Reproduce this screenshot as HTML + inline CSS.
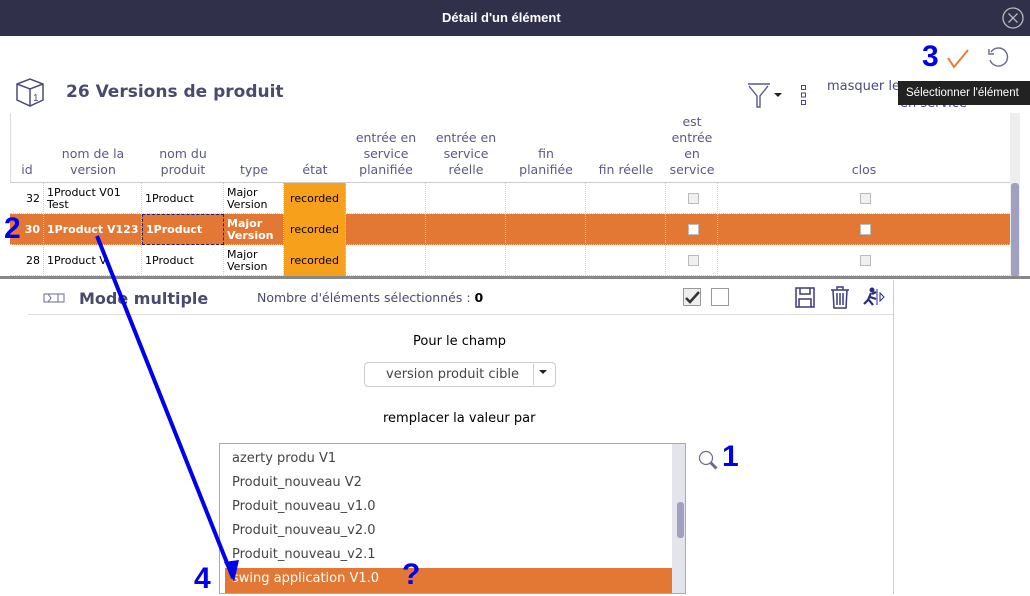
<!DOCTYPE html>
<html><head><meta charset="utf-8"><style>
*{margin:0;padding:0;box-sizing:border-box}
body{width:1030px;height:594px;overflow:hidden;background:#fff;font-family:"DejaVu Sans","Liberation Sans",sans-serif;position:relative;font-size:12px;color:#000}
.a{position:absolute}
.hd{color:#5a5a80;font-size:12.5px;text-align:center;line-height:16px}
.c{position:absolute;top:0;height:31px;border-right:1px dotted #cfcfc0;font-size:11px;line-height:12px;display:flex;align-items:center;padding-left:3px;white-space:nowrap}
.row{position:absolute;left:10px;width:1000px;height:31px;border-bottom:1px dotted #ccc}
.et{background:#f7a01c;justify-content:center;padding:0}
.cb{width:11px;height:11px;border:1px solid #bbb;background:#f0f0f0;margin:auto}
.big{color:#0000ee;font-weight:bold;font-size:30px;position:absolute;font-family:"Liberation Sans",sans-serif}
.li{position:absolute;left:12px;font-size:13px;color:#444}
</style></head><body>
<div class="a" style="left:0;top:0;width:1030px;height:36px;background:#30304b"></div>
<div class="a" style="left:442px;top:10px;color:#fff;font-weight:bold;font-size:13px;font-family:'Liberation Sans',sans-serif">Détail d'un élément</div>
<svg class="a" style="left:1001px;top:6px" width="24" height="24"><circle cx="12" cy="12" r="10" fill="none" stroke="#bbb" stroke-width="1.3"/><path d="M7.5 7.5l9 9M16.5 7.5l-9 9" stroke="#bbb" stroke-width="1.3"/></svg>

<div class="big" style="left:922px;top:40px">3</div>
<svg class="a" style="left:946px;top:48px" width="24" height="22"><path d="M2 10l6 9L22 2" fill="none" stroke="#e97c30" stroke-width="2"/></svg>
<svg class="a" style="left:986px;top:46px" width="24" height="24"><path d="M5 6A9 9 0 1 1 4 14" fill="none" stroke="#6a6a90" stroke-width="1.4"/><path d="M3 3v5h5" fill="none" stroke="#6a6a90" stroke-width="1.4"/></svg>

<svg class="a" style="left:14px;top:76px" width="34" height="34"><path d="M3 8L16 3l13 5v16L16 30 3 24z M3 8l13 5 13-5 M16 13v17" fill="none" stroke="#4a4a80" stroke-width="1.5"/><text x="19" y="25" font-size="10" fill="#4a4a80" font-family="Liberation Sans">1</text></svg>
<div class="a" style="left:66px;top:82px;font-size:17px;font-weight:bold;color:#4a4a6e">26 Versions de produit</div>
<svg class="a" style="left:746px;top:82px" width="40" height="26"><path d="M2 2h22M3 4l8 10v11h3V14l8-10" fill="none" stroke="#5a5a90" stroke-width="1.4"/><path d="M28 11h8l-4 4z" fill="#222"/></svg>
<svg class="a" style="left:800px;top:84px" width="10" height="22"><rect x="1.5" y="1.5" width="4" height="4" fill="none" stroke="#4a4a80"/><rect x="1.5" y="9" width="4" height="4" fill="none" stroke="#4a4a80"/><rect x="1.5" y="16.5" width="4" height="4" fill="none" stroke="#4a4a80"/></svg>
<div class="a" style="left:827px;top:79px;font-size:13px;color:#4a4a80">masquer le</div>
<div class="a" style="left:900px;top:96px;font-size:13px;color:#4a4a80">en service</div>
<div class="a" style="left:898px;top:81px;width:132px;height:24px;background:#222;color:#fff;font-size:11.5px;line-height:24px;padding-left:8px;font-family:'Liberation Sans',sans-serif">Sélectionner l'élément</div>

<div class="a" style="left:10px;top:113px;width:1px;height:70px;background:#ddd"></div>
<div class="a hd" style="left:10px;top:162px;width:34px">id</div>
<div class="a hd" style="left:44px;top:146px;width:98px">nom de la<br>version</div>
<div class="a hd" style="left:142px;top:146px;width:82px">nom du<br>produit</div>
<div class="a hd" style="left:224px;top:162px;width:60px">type</div>
<div class="a hd" style="left:284px;top:162px;width:62px">état</div>
<div class="a hd" style="left:346px;top:130px;width:80px">entrée en<br>service<br>planifiée</div>
<div class="a hd" style="left:426px;top:130px;width:80px">entrée en<br>service<br>réelle</div>
<div class="a hd" style="left:506px;top:146px;width:80px">fin<br>planifiée</div>
<div class="a hd" style="left:586px;top:162px;width:80px">fin réelle</div>
<div class="a hd" style="left:666px;top:114px;width:52px">est<br>entrée<br>en<br>service</div>
<div class="a hd" style="left:718px;top:162px;width:292px">clos</div>
<div class="a" style="left:10px;top:182px;width:1000px;height:1px;background:#ccc"></div>
<div class="a" style="left:1010px;top:113px;width:10px;height:164px;background:#eee"></div>
<div class="a" style="left:1011px;top:183px;width:8px;height:94px;background:#a0a0c0;border-radius:3px"></div>

<div class="row" style="top:183px">
<div class="c" style="left:0;width:34px;justify-content:flex-end;padding-right:3px">32</div>
<div class="c" style="left:34px;width:98px">1Product V01<br>Test</div>
<div class="c" style="left:132px;width:82px">1Product</div>
<div class="c" style="left:214px;width:60px">Major<br>Version</div>
<div class="c et" style="left:274px;width:62px">recorded</div>
<div class="c" style="left:336px;width:80px"></div><div class="c" style="left:416px;width:80px"></div><div class="c" style="left:496px;width:80px"></div><div class="c" style="left:576px;width:80px"></div>
<div class="c" style="left:656px;width:52px"><div class="cb"></div></div>
<div class="c" style="left:708px;width:292px;border:0"><div class="cb"></div></div>
</div>
<div class="row" style="top:214px;background:#e37834;color:#fff;font-weight:bold">
<div class="c" style="left:0;width:34px;justify-content:flex-end;padding-right:3px">30</div>
<div class="c" style="left:34px;width:98px">1Product V123</div>
<div class="c" style="left:132px;width:82px;border:1px dashed #22226a">1Product</div>
<div class="c" style="left:214px;width:60px">Major<br>Version</div>
<div class="c et" style="left:274px;width:62px;color:#000;font-weight:normal">recorded</div>
<div class="c" style="left:336px;width:80px"></div><div class="c" style="left:416px;width:80px"></div><div class="c" style="left:496px;width:80px"></div><div class="c" style="left:576px;width:80px"></div>
<div class="c" style="left:656px;width:52px"><div class="cb" style="background:#fff"></div></div>
<div class="c" style="left:708px;width:292px;border:0"><div class="cb" style="background:#fff"></div></div>
</div>
<div class="row" style="top:245px">
<div class="c" style="left:0;width:34px;justify-content:flex-end;padding-right:3px">28</div>
<div class="c" style="left:34px;width:98px">1Product V</div>
<div class="c" style="left:132px;width:82px">1Product</div>
<div class="c" style="left:214px;width:60px">Major<br>Version</div>
<div class="c et" style="left:274px;width:62px">recorded</div>
<div class="c" style="left:336px;width:80px"></div><div class="c" style="left:416px;width:80px"></div><div class="c" style="left:496px;width:80px"></div><div class="c" style="left:576px;width:80px"></div>
<div class="c" style="left:656px;width:52px"><div class="cb"></div></div>
<div class="c" style="left:708px;width:292px;border:0"><div class="cb"></div></div>
</div>
<div class="a" style="left:0;top:276px;width:1030px;height:3px;background:#888"></div>
<div class="big" style="left:4px;top:212px">2</div>

<div class="a" style="left:893px;top:280px;width:1px;height:314px;background:#ccc"></div>
<div class="a" style="left:28px;top:314px;width:865px;height:1px;background:#ddd"></div>
<svg class="a" style="left:42px;top:291px" width="24" height="14"><path d="M2 3h20v8H2zM6 3l3 4-3 4M16 3v8" fill="none" stroke="#6a6a90" stroke-width="1"/></svg>
<div class="a" style="left:79px;top:289px;font-size:16px;font-weight:bold;color:#4a4a6e">Mode multiple</div>
<div class="a" style="left:257px;top:290px;font-size:12.5px;color:#4a4a6e">Nombre d'éléments sélectionnés : <b style="color:#000">0</b></div>
<div class="a" style="left:683px;top:288px;width:18px;height:18px;border:1px solid #999;background:#eee"></div>
<svg class="a" style="left:684px;top:290px" width="17" height="15"><path d="M2 8l4 4 9-10" fill="none" stroke="#333" stroke-width="2.5"/></svg>
<div class="a" style="left:711px;top:288px;width:18px;height:18px;border:1px solid #999"></div>
<svg class="a" style="left:794px;top:286px" width="22" height="22"><path d="M2 2h18v19H2z M6 2v6h10V2 M5 21v-8h12v8" fill="none" stroke="#3a3a80" stroke-width="1.5"/></svg>
<svg class="a" style="left:829px;top:285px" width="22" height="24"><path d="M2 5h18M8 5V2h6v3M4 5l1 18h12l1-18M8 8v12M11 8v12M14 8v12" fill="none" stroke="#3a3a80" stroke-width="1.5"/></svg>
<svg class="a" style="left:862px;top:286px" width="26" height="22"><circle cx="10" cy="4" r="2.5" fill="#2a2a80"/><path d="M9 7L6 14l-4 4M8 11l6 2M7 14l4 5M10 8l4-2" stroke="#2a2a80" stroke-width="2.2" fill="none"/><path d="M15 3v16M18 7v8l4-4z" stroke="#2a2a80" fill="none"/></svg>

<div class="a" style="left:413px;top:334px;font-size:13px">Pour le champ</div>
<div class="a" style="left:364px;top:362px;width:192px;height:25px;border:1px solid #ccc;border-radius:4px"></div>
<div class="a" style="left:386px;top:367px;font-size:13px;color:#444">version produit cible</div>
<div class="a" style="left:533px;top:364px;width:1px;height:21px;background:#ccc"></div>
<svg class="a" style="left:539px;top:370px" width="10" height="6"><path d="M0 0h8l-4 4z" fill="#222"/></svg>
<div class="a" style="left:383px;top:411px;font-size:13px">remplacer la valeur par</div>

<div class="a" style="left:219px;top:443px;width:467px;height:151px;border:1px solid #aaa;overflow:hidden">
<div class="li" style="top:7px">azerty produ V1</div>
<div class="li" style="top:31px">Produit_nouveau V2</div>
<div class="li" style="top:55px">Produit_nouveau_v1.0</div>
<div class="li" style="top:79px">Produit_nouveau_v2.0</div>
<div class="li" style="top:103px">Produit_nouveau_v2.1</div>
<div class="a" style="left:5px;top:124px;width:447px;height:26px;background:#e37834"></div>
<div class="li" style="top:127px;color:#fff">swing application V1.0</div>
<div class="a" style="left:452px;top:0;width:14px;height:150px;background:#e4e4ec"></div>
<div class="a" style="left:457px;top:58px;width:7px;height:36px;background:#a0a0c0;border-radius:3px"></div>
</div>
<svg class="a" style="left:697px;top:449px" width="24" height="24"><circle cx="9" cy="9" r="6.5" fill="none" stroke="#6a6a90" stroke-width="1.2"/><path d="M13.5 13.5l6 6" stroke="#6a6a90" stroke-width="3"/></svg>
<div class="big" style="left:722px;top:440px">1</div>
<div class="big" style="left:194px;top:562px">4</div>
<div class="big" style="left:402px;top:558px">?</div>
<svg class="a" style="left:0;top:0" width="1030" height="594"><path d="M97 236L233 578" stroke="#0000ee" stroke-width="4"/><path d="M224 562l10 20 5-22z" fill="#0000ee"/></svg>
</body></html>
